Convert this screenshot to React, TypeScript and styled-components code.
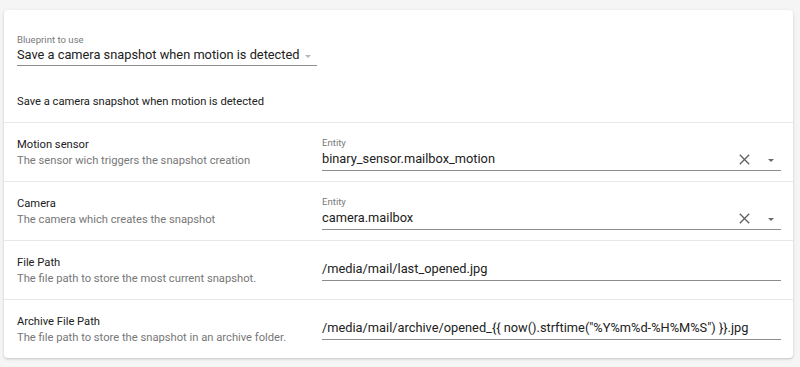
import styled, { createGlobalStyle } from "styled-components";

const GlobalStyle = createGlobalStyle`
  html, body {
    margin: 0;
    padding: 0;
    background: #f5f5f5;
    font-family: Roboto, "Noto Sans", sans-serif;
    -webkit-font-smoothing: antialiased;
  }
`;

const Page = styled.div`
  padding: 10px 7px 10px 4px;
  width: 800px;
  box-sizing: border-box;
`;

const Card = styled.div`
  background: #ffffff;
  border-radius: 4px;
  box-shadow: 0 1px 2px rgba(0, 0, 0, 0.14), 0 1px 4px rgba(0, 0, 0, 0.08);
  overflow: hidden;
`;

const Header = styled.div`
  padding: 24px 12px 0 13px;
`;

const SelectField = styled.div`
  width: 300px;
  border-bottom: 1px solid #8c8c8c;
  padding-bottom: 2px;
`;

const FloatLabel = styled.div`
  font-size: 9.6px;
  line-height: 12px;
  margin-bottom: 1px;
  color: #7a7a7a;
`;

const SelectValue = styled.div`
  display: flex;
  align-items: center;
  font-size: 12.8px;
  line-height: 16px;
  color: #212121;
  white-space: nowrap;
`;

const Caret = styled.span<{ $color?: string }>`
  display: inline-block;
  width: 0;
  height: 0;
  margin-left: 5px;
  margin-top: 2px;
  border-left: 3.5px solid transparent;
  border-right: 3.5px solid transparent;
  border-top: 3.5px solid ${({ $color }) => $color || "#b5b5b5"};
`;

const Description = styled.div`
  padding: 28px 12px 13px 13px;
  font-size: 11.2px;
  line-height: 15px;
  color: #212121;
`;

const Row = styled.div`
  display: flex;
  align-items: center;
  min-height: 58px;
  padding: 0 12px 0 13px;
  border-top: 1px solid #e8e8e8;
`;

const RowInfo = styled.div`
  flex: 0 0 305px;
  display: flex;
  flex-direction: column;
  gap: 1px;
  margin-top: 1px;
`;

const RowTitle = styled.div`
  font-size: 11.2px;
  line-height: 15px;
  color: #212121;
`;

const RowDesc = styled.div`
  font-size: 11.2px;
  line-height: 15px;
  color: #777777;
`;

const Field = styled.div<{ $labelled?: boolean }>`
  flex: 1;
  border-bottom: 1px solid #8c8c8c;
  padding-bottom: ${({ $labelled }) => ($labelled ? "2px" : "3px")};
  margin-top: ${({ $labelled }) => ($labelled ? "4px" : "0")};
`;

const FieldLine = styled.div<{ $tall?: boolean }>`
  display: flex;
  align-items: center;
  font-size: 12.8px;
  line-height: ${({ $tall }) => ($tall ? "18px" : "17px")};
  color: #212121;
`;

const FieldText = styled.span`
  flex: 1;
  white-space: nowrap;
`;

const Icons = styled.div`
  display: flex;
  align-items: center;
  gap: 13px;
  margin-right: 7px;
`;

const ClearIcon = () => (
  <svg width="11" height="11" viewBox="0 0 11 11">
    <path d="M0.8 0.8 L10.2 10.2 M10.2 0.8 L0.8 10.2" stroke="#5f5f5f" strokeWidth="1.3" fill="none" />
  </svg>
);

const rows = [
  {
    title: "Motion sensor",
    desc: "The sensor wich triggers the snapshot creation",
    label: "Entity",
    value: "binary_sensor.mailbox_motion",
    picker: true,
  },
  {
    title: "Camera",
    desc: "The camera which creates the snapshot",
    label: "Entity",
    value: "camera.mailbox",
    picker: true,
  },
  {
    title: "File Path",
    desc: "The file path to store the most current snapshot.",
    value: "/media/mail/last_opened.jpg",
  },
  {
    title: "Archive File Path",
    desc: "The file path to store the snapshot in an archive folder.",
    value: '/media/mail/archive/opened_{{ now().strftime("%Y%m%d-%H%M%S") }}.jpg',
  },
];

export default function App() {
  return (
    <Page>
      <GlobalStyle />
      <Card>
        <Header>
          <SelectField>
            <FloatLabel>Blueprint to use</FloatLabel>
            <SelectValue>
              Save a camera snapshot when motion is detected
              <Caret />
            </SelectValue>
          </SelectField>
        </Header>
        <Description>Save a camera snapshot when motion is detected</Description>
        {rows.map((row) => (
          <Row key={row.title}>
            <RowInfo>
              <RowTitle>{row.title}</RowTitle>
              <RowDesc>{row.desc}</RowDesc>
            </RowInfo>
            <Field $labelled={!!row.label}>
              {row.label && <FloatLabel>{row.label}</FloatLabel>}
              <FieldLine $tall={!!row.label}>
                <FieldText>{row.value}</FieldText>
                {row.picker && (
                  <Icons>
                    <ClearIcon />
                    <Caret $color="#6a6a6a" />
                  </Icons>
                )}
              </FieldLine>
            </Field>
          </Row>
        ))}
      </Card>
    </Page>
  );
}
